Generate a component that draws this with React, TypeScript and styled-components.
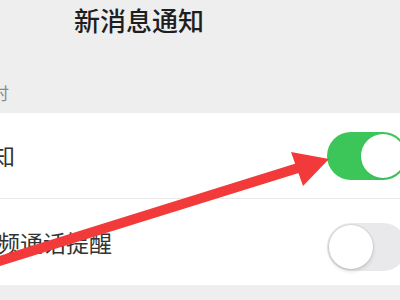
import React from "react";
import styled, { createGlobalStyle } from "styled-components";

const Global = createGlobalStyle`
  html, body { margin: 0; padding: 0; background: #eeeeee; }
  body { width: 400px; height: 300px; overflow: hidden; }
`;

const Page = styled.div`
  position: relative;
  width: 400px;
  height: 300px;
  overflow: hidden;
  background: #eeeeee;
  display: flex;
  flex-direction: column;
  font-family: "Noto Sans CJK SC", "Noto Sans", sans-serif;
`;

const NavBar = styled.div`
  height: 40px;
  display: flex;
  align-items: center;
  padding-left: 74px;
  flex-shrink: 0;
`;

const Title = styled.div`
  font-size: 26px;
  line-height: 1;
  font-weight: 500;
  color: #1e1e1e;
  white-space: nowrap;
`;

const SectionHeader = styled.div`
  height: 73px;
  display: flex;
  align-items: flex-end;
  padding-bottom: 12px;
  box-sizing: border-box;
  flex-shrink: 0;
`;

const HeaderText = styled.div<{ $offset: number }>`
  font-size: 17px;
  line-height: 1;
  color: #8c8c8c;
  white-space: nowrap;
  margin-left: ${(p) => p.$offset}px;
`;

const Group = styled.div`
  background: #ffffff;
  display: flex;
  flex-direction: column;
  flex-shrink: 0;
`;

const Row = styled.div<{ $height: number }>`
  height: ${(p) => p.$height}px;
  display: flex;
  align-items: center;
  justify-content: space-between;
  padding-right: 0;
`;

const Label = styled.div<{ $offset: number }>`
  font-size: 23px;
  line-height: 1;
  color: #333333;
  white-space: nowrap;
  margin-left: ${(p) => p.$offset}px;
`;

const Divider = styled.div`
  height: 1px;
  background: #e8e8e8;
`;

const Track = styled.div<{ $on: boolean; $drop: number }>`
  width: 80px;
  height: 48px;
  border-radius: 24px;
  box-sizing: border-box;
  margin-right: -7px;
  margin-top: ${(p) => p.$drop}px;
  background: ${(p) => (p.$on ? "#3cc65a" : "#e9e9ec")};
  display: flex;
  align-items: center;
  justify-content: ${(p) => (p.$on ? "flex-end" : "flex-start")};
  padding: 0 2px;
  flex-shrink: 0;
`;

const Knob = styled.div<{ $on: boolean }>`
  width: 44px;
  height: 44px;
  border-radius: 50%;
  background: #ffffff;
  box-shadow: ${(p) =>
    p.$on
      ? "0 1px 2px rgba(0,0,0,0.08)"
      : "0 0 0 1px rgba(0,0,0,0.06), 0 2px 4px rgba(0,0,0,0.14)"};
`;

const Overlay = styled.svg`
  position: absolute;
  left: 0;
  top: 0;
  pointer-events: none;
`;

function Toggle({ on, drop = 0 }: { on: boolean; drop?: number }) {
  return (
    <Track $on={on} $drop={drop}>
      <Knob $on={on} />
    </Track>
  );
}

export default function App() {
  return (
    <Page>
      <Global />
      <NavBar>
        <Title>新消息通知</Title>
      </NavBar>
      <SectionHeader>
        <HeaderText $offset={-93}>接收新消息时</HeaderText>
      </SectionHeader>
      <Group>
        <Row $height={85}>
          <Label $offset={-100}>新消息通知</Label>
          <Toggle on={true} />
        </Row>
        <Divider />
        <Row $height={86}>
          <Label $offset={-95}>语音和视频通话提醒</Label>
          <Toggle on={false} drop={9} />
        </Row>
      </Group>
      <Overlay width="400" height="300" viewBox="0 0 400 300">
        <line x1="-10" y1="264" x2="298" y2="168" stroke="#f23a3a" strokeWidth="10" />
        <polygon points="329,159 291,152 303,186" fill="#f23a3a" />
      </Overlay>
    </Page>
  );
}
